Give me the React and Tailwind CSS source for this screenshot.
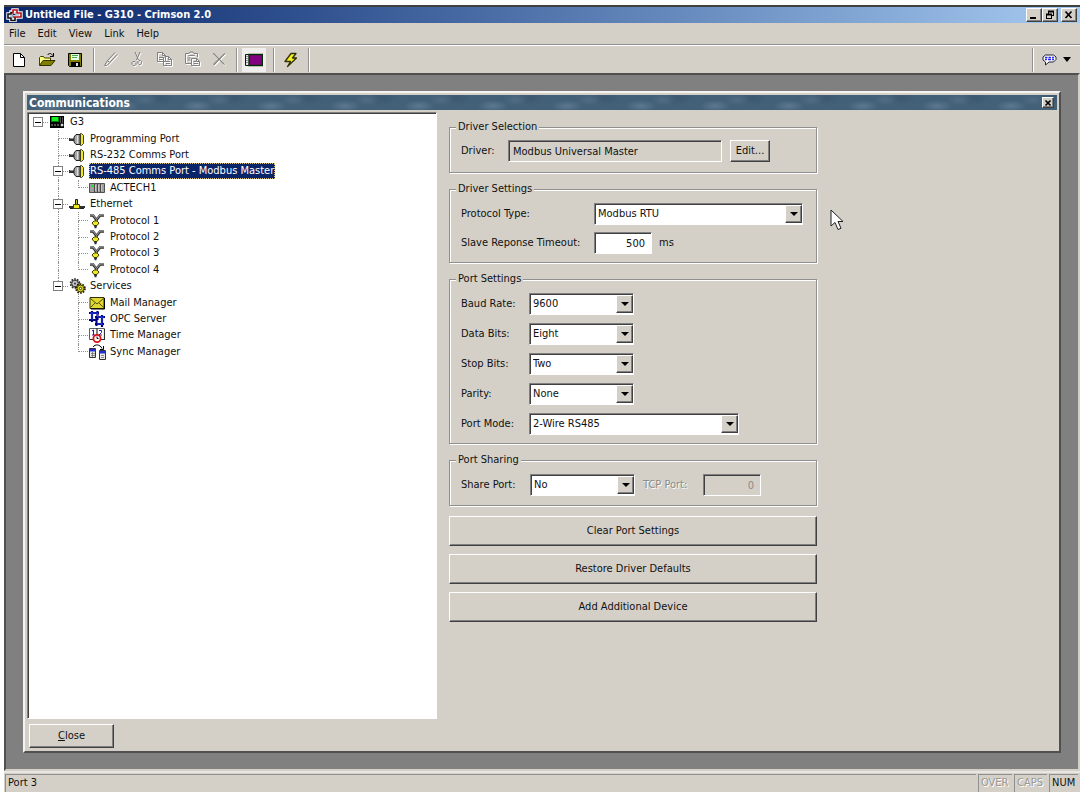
import React from 'react';

const RAISED =
  'bg-[#d4d0c8] border border-t-white border-l-white border-b-[#404040] border-r-[#404040] shadow-[inset_-1px_-1px_0_#808080]';
const SUNKEN =
  'border border-t-[#808080] border-l-[#808080] border-b-white border-r-white shadow-[inset_1px_1px_0_#404040]';

/* ---------- icons ---------- */

function Icon({ w = 16, h = 16, children, className = '' }) {
  return (
    <svg width={w} height={h} viewBox={`0 0 ${w} ${h}`} className={`shrink-0 ${className}`} fill="none" aria-hidden="true">
      {children}
    </svg>
  );
}

const AppIcon = () => (
  <Icon w={17} h={14}>
    <path d="M8.500 4H5v2H2v4h3v2.500h4V9" stroke="#fff" strokeWidth="3.400" />
    <path d="M7 6V2h4v3h4v4h-4V9H7" stroke="#fff" strokeWidth="3.400" />
    <path d="M6.500 4.500H5V6H2v4h3v2.500h4V9" stroke="#111" strokeWidth="1.600" />
    <path d="M7 6V2h4v3h4v4H7" stroke="#b01018" strokeWidth="1.600" />
  </Icon>
);

const NewIcon = () => (
  <Icon>
    <path d="M2.500 1.500h7l4 4v9h-11z" fill="#fff" stroke="#000" />
    <path d="M9.500 1.500v4h4" stroke="#000" />
  </Icon>
);

const OpenIcon = () => (
  <Icon w={18}>
    <path d="M1.500 13V5.500l1-1h3l1 1.500h6V8" fill="#ffff80" stroke="#404000" />
    <path d="M1.500 13.500L5 8.500h12l-4 5z" fill="#808000" stroke="#303000" />
    <path d="M9.500 3c1.500-2 4-2 5 .500M15.500 1v3.500H12" stroke="#000" />
  </Icon>
);

const SaveIcon = () => (
  <Icon>
    <path d="M1.500 1.500h13v13h-12l-1-1z" fill="#808000" stroke="#000" />
    <path d="M4 2h8v6H4z" fill="#e8ffe8" />
    <path d="M5 3.500h6M5 5.500h5" stroke="#40b040" />
    <path d="M4 10h9v4H4z" fill="#000" />
    <path d="M9 11h2v3H9z" fill="#e0e0e0" />
  </Icon>
);

function Disabled({ w = 16, d }) {
  return (
    <Icon w={w + 1} h={17}>
      <g transform="translate(1 1)">
        <path d={d} stroke="#fff" />
      </g>
      <path d={d} stroke="#808080" />
    </Icon>
  );
}

const BRUSH = 'M1.500 14.500l3-5L12 1.500M4.500 14L14 3.500M4.500 9.500l1.500 1.500M2 14.500h2';
const SCISSORS =
  'M6 1l3.500 8M11 1L7.500 9M4 10.500h2l1 1v2l-1 1H4l-1-1v-2zM10 9.500h1.500l1 1v2l-1 1H10l-1-1v-2z';
const COPY = 'M1.500 1.500h5l3 3v6h-8zM6.500 1.500v3h3M8.500 5.500h4l3 3v6h-8V6M12.500 5.500v3h3M3 6.500h4M3 8.500h4M10 10.500h4M10 12.500h4';
const PASTE = 'M7 12.500H1.500v-10H5l1-1.500h3l1 1.500h3.500V6M4.500 4.500h6M7.500 7.500h5l3 3v4h-8zM12.500 7.500v3h3M9.500 10.500H12M9.500 12.500H14M3.500 7h3M3.500 9h3';
const DELETE = 'M2 3l1-.5 10.500 11M3 14L14 2.500M2.500 2.500L13 13.500M2 13.500L13.500 2.500';

const ScreenIcon = () => (
  <Icon w={18} h={14}>
    <path d="M.5 1.500h17v11H.5z" fill="#e8e8e8" stroke="#101010" />
    <path d="M4 1.500h13.500v11H4z" fill="#800080" stroke="#003000" strokeWidth="1.400" />
    <path d="M1.500 3.500h1M1.500 5.500h1M1.500 7.500h1M1.500 9.500h1" stroke="#404040" />
  </Icon>
);

const BoltIcon = () => (
  <Icon>
    <path d="M8 1.500h5L9.500 6h4L4.500 14.500 7.500 9.500H2z" fill="#f4f020" stroke="#303000" strokeWidth="1.300" strokeLinejoin="round" />
  </Icon>
);

const BubbleIcon = () => (
  <Icon w={15} h={12}>
    <path d="M3.500 1h8l2.500 2v2.500L11.500 8H7l-3.500 3V8L1 6V3z" fill="#fff" stroke="#202030" strokeLinejoin="round" />
    <path d="M3 3.500h2.500M6.500 3.500h2.500M10 3.500h2M3 5.500h2M6 5.500h3M10 5.500h2" stroke="#2828ff" strokeWidth="1.400" />
  </Icon>
);

const Caret = ({ w = 8, h = 4 }) => (
  <svg width={w} height={h} viewBox="0 0 8 4" preserveAspectRatio="none" aria-hidden="true">
    <path d="M0 0h8L4 4z" fill="#000" />
  </svg>
);

const PanelCross = () => (
  <Icon w={8} h={8}>
    <path d="M1.500 1.500l5 5M6.500 1.500l-5 5" stroke="#000" strokeWidth="1.700" />
  </Icon>
);

const TREE_ICONS = {
  unit: (
    <Icon>
      <path d="M1 2h14v12H1z" fill="#000" />
      <path d="M2 3h8v5H2z" fill="#008000" />
      <path d="M3 3h6v4H3z" fill="#10f020" />
      <path d="M11 4h1M13 4h1M11 6h1M13 6h1M11 8h1M13 8h1M2 11h2M5 11h2M8 11h2M12 11h2" stroke="#a0a0a0" />
      <path d="M13 9.500v3M11.500 11h3" stroke="#fff" />
    </Icon>
  ),
  port: (
    <Icon>
      <path d="M0 7h6v3H0z" fill="#303030" />
      <path d="M1 7.500h4" stroke="#909090" />
      <path d="M5 6l2-2.500h4v10H7L5 11z" fill="#a8a8a8" stroke="#202020" />
      <path d="M8.500 4.500v8" stroke="#e0e0e0" />
      <path d="M11.500 2.500h1l2 2v8l-2 2h-1z" fill="#f0e820" stroke="#404020" />
    </Icon>
  ),
  device: (
    <Icon>
      <path d="M.5 3.500h15v9H.5z" fill="#a0a0a0" stroke="#505050" />
      <path d="M5.500 4v8M8.500 4v8M11.500 4v8" stroke="#484848" />
      <path d="M6.500 5v6M9.500 5v6M12.500 5v6" stroke="#c8c8c8" />
      <path d="M2 5h2v2H2z" fill="#20e020" />
    </Icon>
  ),
  ethernet: (
    <Icon>
      <path d="M0 11h5M11 11h5" stroke="#303030" strokeWidth="2" />
      <path d="M1 12.500h14" stroke="#202020" />
      <path d="M6.500 3.500h2v5h-2z" fill="#c8c020" stroke="#202000" />
      <path d="M4.500 8.500h6v4h-6z" fill="#f0e820" stroke="#404000" />
    </Icon>
  ),
  protocol: (
    <Icon>
      <path d="M1 2.500h3L7.500 7v4M15 2.500h-4L7.500 7" stroke="#303030" strokeWidth="2.600" />
      <path d="M1 2h3L7.500 6.500v3M15 2h-4L8 6" stroke="#b0b0b0" strokeWidth=".9" />
      <path d="M3 10l2-2h3l2 2-2 2.500H5z" fill="#f0e820" stroke="#404000" />
      <path d="M5 13h3M5.500 14.500h2" stroke="#303030" strokeWidth="1.300" />
    </Icon>
  ),
  services: (
    <Icon w={17} h={16}>
      <circle cx="6" cy="5.500" r="4.300" fill="#b0b0b0" stroke="#303030" strokeWidth="2" strokeDasharray="1.600 1.100" />
      <circle cx="6" cy="5.500" r="3.200" fill="#c8c8c8" stroke="#404040" />
      <circle cx="6" cy="5.500" r="1" fill="#303030" />
      <circle cx="11.500" cy="10.500" r="4.300" fill="#d8d020" stroke="#202000" strokeWidth="2" strokeDasharray="1.600 1.100" />
      <circle cx="11.500" cy="10.500" r="3.300" fill="#e8e020" stroke="#505000" />
      <circle cx="11.500" cy="10.500" r="1.200" fill="#fff" stroke="#303000" />
    </Icon>
  ),
  mail: (
    <Icon>
      <path d="M1 2.500h14v11H1z" fill="#e0d830" stroke="#303000" />
      <path d="M1.500 3.500L8 9l6.500-5.500M1.500 12.500L6 8M14.500 12.500L10 8" stroke="#505000" />
      <path d="M15.500 3v11H2" stroke="#000" />
    </Icon>
  ),
  opc: (
    <Icon>
      <path d="M0 2h10M0 9h8M3 0v11M8.500 0v9" stroke="#000080" strokeWidth="2.200" />
      <path d="M6 6h10M6 13h9M7.500 5v10M13 4v12" stroke="#000080" strokeWidth="2.200" />
      <path d="M1 2h8M3 2v7M8.500 2v4M13 6v8M8 13h5M9 6h6" stroke="#2848f0" strokeWidth=".9" />
    </Icon>
  ),
  time: (
    <Icon>
      <path d="M.5 1.500h15v11H.5z" fill="#fff" stroke="#606060" />
      <path d="M8 1v12M1 12.500h14M15.500 2v11" stroke="#303030" strokeWidth="1.200" />
      <path d="M3 4l1.500-1v5M3 8h3M10 3.500h2.500v2L10 8h3" stroke="#2020a0" />
      <circle cx="8" cy="11.500" r="3.600" fill="#fff" stroke="#e01010" strokeWidth="1.800" />
      <path d="M8 9.500v2h1.500" stroke="#000" />
    </Icon>
  ),
  sync: (
    <Icon w={17}>
      <path d="M4 3c2-3 7-3 9 1.500M14.500 2v3.500H11" stroke="#000" />
      <path d="M.5 4.500h6v9h-6z" fill="#e8e8e8" stroke="#303030" />
      <path d="M.5 5h6v2.500h-6z" fill="#2030d0" />
      <path d="M2 9.500h4M2 11.500h4M3.500 8v5" stroke="#707070" strokeWidth=".8" />
      <path d="M10.500 6.500h6v9h-6z" fill="#e8e8e8" stroke="#303030" />
      <path d="M10.500 7h6v2.500h-6z" fill="#2030d0" />
      <path d="M12 11.500h3M12 13.500h3" stroke="#707070" strokeWidth=".8" />
    </Icon>
  ),
};

/* ---------- tree ---------- */

// guides: ' ' blank, '|' passing line, '+' branch, 'L' last branch, '-' root branch
const TREE = [
  { label: 'G3', icon: 'unit', guides: '-', open: true },
  { label: 'Programming Port', icon: 'port', guides: ' +' },
  { label: 'RS-232 Comms Port', icon: 'port', guides: ' +' },
  { label: 'RS-485 Comms Port - Modbus Master', icon: 'port', guides: ' +', open: true, selected: true },
  { label: 'ACTECH1', icon: 'device', guides: ' |L' },
  { label: 'Ethernet', icon: 'ethernet', guides: ' +', open: true },
  { label: 'Protocol 1', icon: 'protocol', guides: ' |+' },
  { label: 'Protocol 2', icon: 'protocol', guides: ' |+' },
  { label: 'Protocol 3', icon: 'protocol', guides: ' |+' },
  { label: 'Protocol 4', icon: 'protocol', guides: ' |L' },
  { label: 'Services', icon: 'services', guides: ' L', open: true },
  { label: 'Mail Manager', icon: 'mail', guides: '  +' },
  { label: 'OPC Server', icon: 'opc', guides: '  +' },
  { label: 'Time Manager', icon: 'time', guides: '  +' },
  { label: 'Sync Manager', icon: 'sync', guides: '  L' },
];

function Guide({ kind, expander }) {
  const up = kind === '|' || kind === '+' || kind === 'L';
  const down = kind === '|' || kind === '+';
  const across = kind === '+' || kind === 'L' || kind === '-';
  return (
    <span className="relative flex w-5 shrink-0 flex-col self-stretch pl-[10px]">
      <span className={`flex-1 border-dotted border-[#909090] ${up ? 'border-l' : ''} ${across ? 'border-b' : ''}`} />
      <span className={`flex-1 border-dotted border-[#909090] ${down ? 'border-l' : ''}`} />
      {expander && (
        <button
          type="button"
          aria-label="Collapse"
          className="absolute top-1/2 left-[5px] flex size-[10px] -translate-y-1/2 items-center justify-center border border-[#808080] bg-white"
        >
          <span className="h-px w-[6px] bg-black" />
        </button>
      )}
    </span>
  );
}

function Tree() {
  return (
    <ul role="tree" aria-label="Communications" className="grid h-[246px] auto-rows-fr">
      {TREE.map((n) => (
        <li key={n.label} role="treeitem" aria-selected={!!n.selected} className="flex items-center">
          {n.guides.split('').map((g, i) => (
            <Guide key={i} kind={g} expander={n.open && i === n.guides.length - 1} />
          ))}
          <span className="flex w-[18px] shrink-0 justify-center">{TREE_ICONS[n.icon]}</span>
          <span
            className={`ml-[3px] px-px leading-4 whitespace-nowrap ${
              n.selected ? 'bg-[#0a246a] text-white outline-1 -outline-offset-1 outline-dotted outline-[#d8c070]' : ''
            }`}
          >
            {n.label}
          </span>
        </li>
      ))}
    </ul>
  );
}

/* ---------- form ---------- */

function Group({ title, className = '', children }) {
  return (
    <fieldset
      className={`border border-[#909090] px-[11px] shadow-[1px_1px_0_#fff,inset_1px_1px_0_#fff] ${className}`}
    >
      <legend className="-ml-[5px] bg-[#d4d0c8] px-[2px] leading-4">{title}</legend>
      {children}
    </fieldset>
  );
}

function Select({ id, value, options, className }) {
  return (
    <div className={`relative h-[22px] bg-white ${SUNKEN} ${className}`}>
      <select id={id} defaultValue={value} className="block h-5 w-full appearance-none bg-transparent pr-5 pl-[3px] outline-none">
        {options.map((o) => (
          <option key={o}>{o}</option>
        ))}
      </select>
      <span className={`pointer-events-none absolute inset-y-px right-0 flex w-[17px] items-center justify-center ${RAISED}`}>
        <Caret />
      </span>
    </div>
  );
}

function Row({ id, label, labelClass, children }) {
  return (
    <div className="flex items-center">
      <label htmlFor={id} className={`shrink-0 whitespace-nowrap ${labelClass}`}>
        {label}
      </label>
      {children}
    </div>
  );
}

function Form() {
  return (
    <form className="flex w-[368px] flex-col" onSubmit={(e) => e.preventDefault()}>
      <Group title="Driver Selection" className="h-[54px] pt-[5px]">
        <Row id="driver" label="Driver:" labelClass="w-[47px]">
          <input
            id="driver"
            readOnly
            defaultValue="Modbus Universal Master"
            className={`h-[22px] w-[214px] px-1 outline-none ${SUNKEN}`}
          />
          <button type="button" className={`ml-2 h-[22px] w-10 ${RAISED}`}>
            Edit...
          </button>
        </Row>
      </Group>

      <Group title="Driver Settings" className="mt-2 h-[82px] pt-[6px]">
        <div className="flex flex-col gap-[7px]">
          <Row id="ptype" label="Protocol Type:" labelClass="w-[133px]">
            <Select id="ptype" value="Modbus RTU" options={['Modbus RTU', 'Modbus ASCII']} className="w-[209px]" />
          </Row>
          <Row id="timeout" label="Slave Reponse Timeout:" labelClass="w-[133px]">
            <input
              id="timeout"
              defaultValue="500"
              className={`h-[22px] w-[58px] bg-white px-[6px] text-right outline-none ${SUNKEN}`}
            />
            <span className="ml-[7px]">ms</span>
          </Row>
        </div>
      </Group>

      <Group title="Port Settings" className="mt-2 h-[173px] pt-[6px]">
        <div className="flex flex-col gap-2">
          <Row id="baud" label="Baud Rate:" labelClass="w-[68px]">
            <Select id="baud" value="9600" options={['4800', '9600', '19200', '38400']} className="w-[105px]" />
          </Row>
          <Row id="data" label="Data Bits:" labelClass="w-[68px]">
            <Select id="data" value="Eight" options={['Seven', 'Eight']} className="w-[105px]" />
          </Row>
          <Row id="stop" label="Stop Bits:" labelClass="w-[68px]">
            <Select id="stop" value="Two" options={['One', 'Two']} className="w-[105px]" />
          </Row>
          <Row id="parity" label="Parity:" labelClass="w-[68px]">
            <Select id="parity" value="None" options={['None', 'Odd', 'Even']} className="w-[105px]" />
          </Row>
          <Row id="mode" label="Port Mode:" labelClass="w-[68px]">
            <Select id="mode" value="2-Wire RS485" options={['2-Wire RS485', '4-Wire RS485']} className="w-[210px]" />
          </Row>
        </div>
      </Group>

      <Group title="Port Sharing" className="mt-2 h-[54px] pt-[6px]">
        <Row id="share" label="Share Port:" labelClass="w-[69px]">
          <Select id="share" value="No" options={['No', 'Yes']} className="w-[105px]" />
          <label htmlFor="tcp" className="ml-2 w-[60px] shrink-0 text-[#8c8a85] [text-shadow:1px_1px_0_#fff]">
            TCP Port:
          </label>
          <input
            id="tcp"
            disabled
            defaultValue="0"
            className={`h-[22px] w-[58px] px-[6px] text-right text-[#8c8a85] ${SUNKEN}`}
          />
        </Row>
      </Group>

      <div className="mt-[10px] flex flex-col gap-2">
        {['Clear Port Settings', 'Restore Driver Defaults', 'Add Additional Device'].map((t) => (
          <button key={t} type="button" className={`h-[30px] w-full ${RAISED}`}>
            {t}
          </button>
        ))}
      </div>
    </form>
  );
}

/* ---------- window chrome ---------- */

const Separator = ({ className = '' }) => (
  <span className={`h-6 w-[2px] shrink-0 border-l border-[#909090] bg-white ${className}`} />
);

function Tool({ label, className = 'w-7', disabled, children }) {
  return (
    <button type="button" aria-label={label} disabled={disabled} className={`flex h-6 shrink-0 items-center justify-center ${className}`}>
      {children}
    </button>
  );
}

function TitleBar() {
  const btn = `flex h-[14px] w-4 items-center justify-center ${RAISED}`;
  return (
    <header className="flex h-[18px] shrink-0 items-center border-t-2 border-[#404040] bg-linear-to-r from-[#0a246a] to-[#a6caf0] pr-[3px] pl-[2px]">
      <AppIcon />
      <h1 className="ml-[2px] font-bold whitespace-nowrap text-white">Untitled File - G310 - Crimson 2.0</h1>
      <div className="ml-auto flex">
        <button type="button" aria-label="Minimize" className={btn}>
          <Icon w={10} h={10}>
            <path d="M1 8h6" stroke="#000" strokeWidth="2" />
          </Icon>
        </button>
        <button type="button" aria-label="Restore" className={btn}>
          <Icon w={10} h={10}>
            <path d="M3.500 1v3M8.500 1v5M9 5.500H7M1.500 4v5M6.500 4v5M1 8.500h6" stroke="#000" />
            <path d="M3 1.500h6M1 4.500h6" stroke="#000" strokeWidth="1.800" />
          </Icon>
        </button>
        <button type="button" aria-label="Close window" className={`ml-[3px] ${btn}`}>
          <Icon w={10} h={10}>
            <path d="M1.500 1.500l6 6.500M7.500 1.500l-6 6.500" stroke="#000" strokeWidth="1.700" />
          </Icon>
        </button>
      </div>
    </header>
  );
}

function MenuBar() {
  return (
    <nav className="flex h-[22px] shrink-0 items-center gap-3 border-b border-[#909090] pl-[5px]">
      {['File', 'Edit', 'View', 'Link', 'Help'].map((m) => (
        <button key={m} type="button">
          {m}
        </button>
      ))}
    </nav>
  );
}

function ToolBar() {
  return (
    <div role="toolbar" className="flex h-7 shrink-0 items-center border-t border-white pl-px">
      <Tool label="New"><NewIcon /></Tool>
      <Tool label="Open"><OpenIcon /></Tool>
      <Tool label="Save"><SaveIcon /></Tool>
      <Separator className="ml-1" />
      <Tool label="Format" disabled className="ml-[3px] w-[26px]"><Disabled d={BRUSH} /></Tool>
      <Tool label="Cut" disabled className="w-[26px]"><Disabled d={SCISSORS} /></Tool>
      <Tool label="Copy" disabled><Disabled d={COPY} /></Tool>
      <Tool label="Paste" disabled><Disabled d={PASTE} /></Tool>
      <Tool label="Delete" disabled className="w-[26px]"><Disabled d={DELETE} /></Tool>
      <Separator className="ml-1" />
      <Tool label="Screen" className="mx-1 w-6 bg-[#efeeec]"><ScreenIcon /></Tool>
      <Separator className="ml-[3px]" />
      <Tool label="Download" className="mx-1 w-6"><BoltIcon /></Tool>
      <Separator className="ml-px" />
      <Separator className="ml-auto" />
      <button type="button" aria-label="Help" className="mr-[9px] ml-2 flex h-6 items-center gap-[6px]">
        <BubbleIcon />
        <Caret h={5} />
      </button>
    </div>
  );
}

function StatusBar() {
  const cell = 'h-full border-t border-l border-[#909090] px-[2px] leading-4';
  const off = 'text-[#9a9894] [text-shadow:1px_1px_0_#fff]';
  return (
    <footer className="flex h-[21px] shrink-0 gap-[2px] border-t-2 border-[#e8e6e2] pt-px pr-[2px] pl-px">
      <div className={`flex-1 ${cell}`}>Port 3</div>
      <div className={`w-[34px] ${cell} ${off}`}>OVER</div>
      <div className={`w-[33px] ${cell} ${off}`}>CAPS</div>
      <div className={`w-[29px] ${cell}`}>NUM</div>
    </footer>
  );
}

export default function App() {
  return (
    <div className="flex h-screen flex-col bg-white pt-[5px] pr-[6px] pb-[5px] pl-1 font-['DejaVu_Sans_Condensed','DejaVu_Sans',sans-serif] text-[11px] leading-4 text-[#101010]">
      <div className="flex min-h-0 flex-1 flex-col bg-[#d4d0c8]">
        <TitleBar />
        <MenuBar />
        <ToolBar />

        <main className="flex min-h-0 flex-1 border-2 border-t-[#505050] border-r-[#d4d0c8] border-b-[#d4d0c8] border-l-[#505050] bg-[#808080] px-[17px] py-4">
          <section className="flex min-w-0 flex-1 flex-col border-2 border-t-[#f4f3f1] border-r-[#505050] border-b-[#505050] border-l-[#f4f3f1] bg-[#d4d0c8] p-[2px]">
            <div className="flex h-[15px] shrink-0 items-center justify-between bg-[#426078] bg-[radial-gradient(ellipse_16px_6px_at_22px_11px,#5b7890,transparent),radial-gradient(ellipse_12px_6px_at_44px_5px,#4f6c85,transparent),radial-gradient(ellipse_14px_7px_at_60px_3px,#3a586f,transparent)] bg-size-[74px_15px] pr-[3px] pl-[2px]">
              <h2 className="text-[12px] font-bold text-white">Communications</h2>
              <button type="button" aria-label="Close panel" className={`flex h-[11px] w-3 items-center justify-center ${RAISED}`}>
                <PanelCross />
              </button>
            </div>

            <div className="mt-[2px] flex min-h-0 flex-1">
              <div className={`w-[410px] shrink-0 overflow-hidden bg-white pt-px ${SUNKEN}`}>
                <Tree />
              </div>
              <div className="relative min-w-0 flex-1 pt-[7px] pl-3">
                <Form />
                <svg width="14" height="22" viewBox="0 0 14 22" className="absolute top-[97px] left-[393px]" aria-hidden="true">
                  <path d="M1 1v16l4-3.500 3 7 3-1.200-3-6.800h5z" fill="#fff" stroke="#202020" />
                </svg>
              </div>
            </div>

            <button type="button" className={`mt-[5px] mb-px ml-[2px] h-6 w-[85px] shrink-0 ${RAISED}`}>
              <span className="underline">C</span>lose
            </button>
          </section>
        </main>

        <StatusBar />
      </div>
    </div>
  );
}
